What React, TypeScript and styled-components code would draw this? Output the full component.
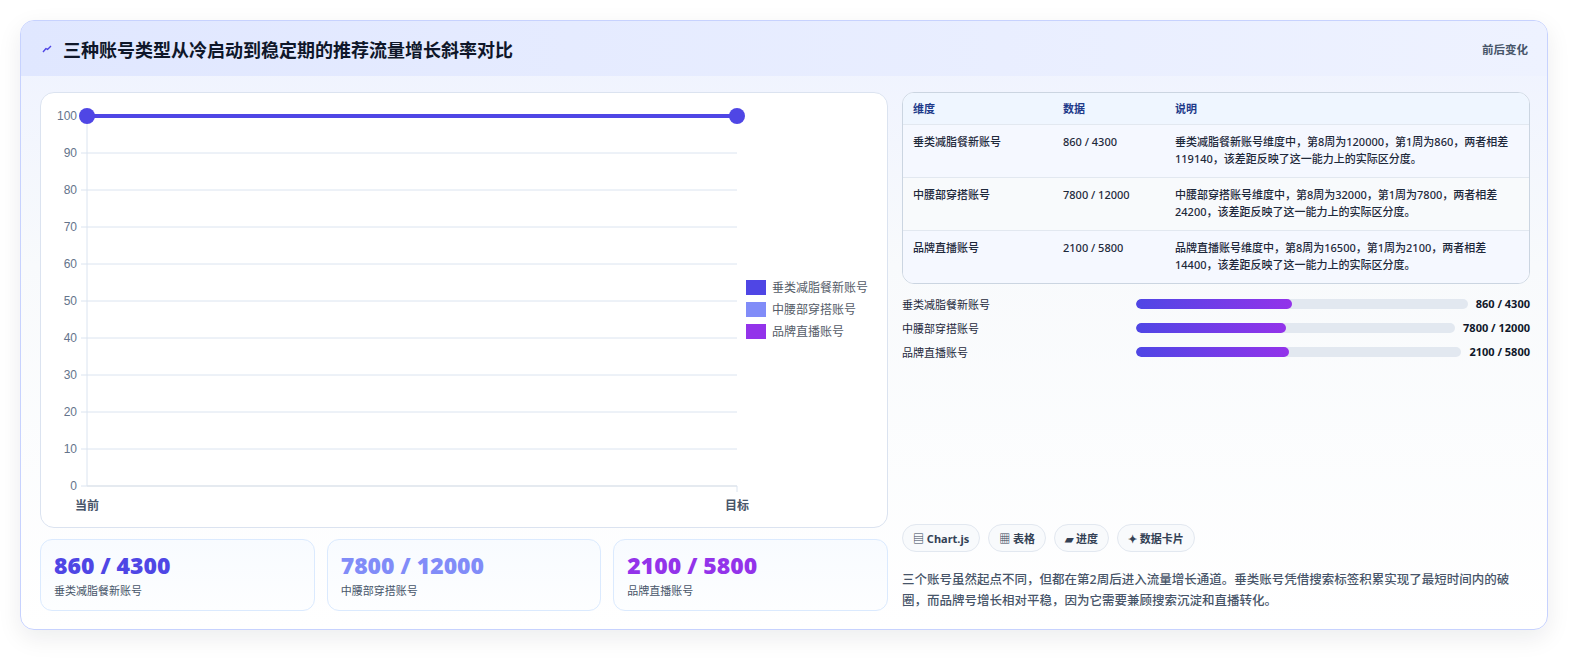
import React from "react";
import styled, { createGlobalStyle } from "styled-components";

const Global = createGlobalStyle`
  html, body { margin: 0; background: #ffffff; font-family: "Noto Sans", "Noto Sans CJK SC", sans-serif; overflow: hidden; }
  * { box-sizing: border-box; }
`;

const Page = styled.div`width: 1588px; height: 658px; padding: 20px 40px 0 20px; overflow: hidden;`;
const Card = styled.div`
  width: 1528px; height: 610px; border: 1px solid #c7d2fe; border-radius: 14px; overflow: hidden;
  background: linear-gradient(180deg, #eef2ff 0%, #f8fafc 40%, #ffffff 100%);
  box-shadow: 0 8px 24px rgba(15, 23, 42, 0.08);
  display: flex; flex-direction: column;
`;
const Header = styled.div`
  height: 55px; flex: none; display: flex; align-items: center; justify-content: space-between;
  padding: 0 19px 0 20px; background: linear-gradient(90deg, #e0e7ff, #eef2ff);
`;
const Title = styled.h1`
  margin: 0; font-size: 18px; font-weight: 700; color: #0f172a; display: flex; align-items: center; gap: 10px;
`;
const Meta = styled.span`font-size: 11.5px; font-weight: 700; color: #475569;`;
const Body = styled.div`
  flex: 1; min-width: 0; display: grid; grid-template-columns: minmax(0, 848px) minmax(0, 1fr); gap: 14px;
  padding: 16px 17px 19px 19px;
`;
const Col = styled.div`display: flex; flex-direction: column; gap: 11px; min-height: 0; min-width: 0;`;
const ChartBox = styled.div`height: 436px; background: #fff; border: 1px solid #dbe3f0; border-radius: 14px; overflow: hidden;`;
const Stats = styled.div`display: grid; grid-template-columns: repeat(3, 1fr); gap: 12px;`;
const Stat = styled.div`
  height: 72px; border: 1px solid #dbeafe; border-radius: 12px; padding: 10px 13px;
  background: linear-gradient(180deg, #f8fbff, #fdfeff);
`;
const StatVal = styled.div<{ $c: string }>`
  font-family: "Open Sans", "Noto Sans", sans-serif; font-size: 23px; font-weight: 800; color: ${p => p.$c}; line-height: 30px;
`;
const StatLabel = styled.div`font-size: 11px; color: #475569; margin-top: 2px;`;
const Table = styled.div`border: 1px solid #cbd5e1; border-radius: 12px; overflow: hidden; background: #fff;`;
const Row = styled.div<{ $head?: boolean; $alt?: boolean }>`
  display: grid; grid-template-columns: 150px 112px 1fr; padding: 0 10px;
  min-height: ${p => (p.$head ? "31px" : "53px")}; align-items: ${p => (p.$head ? "center" : "start")};
  padding-top: ${p => (p.$head ? "0" : "8px")};
  background: ${p => (p.$head ? "#eff6ff" : p.$alt ? "#f8fafc" : "#f5f8ff")};
  border-top: ${p => (p.$head ? "none" : "1px solid #e2e8f0")};
  font-size: 11px; line-height: 17px; color: ${p => (p.$head ? "#1e3a8a" : "#1e293b")};
  font-weight: ${p => (p.$head ? 700 : 500)};
`;
const Bars = styled.div`display: flex; flex-direction: column; gap: 7px;`;
const BarRow = styled.div`display: grid; grid-template-columns: 226px 1fr auto; align-items: center; gap: 8px; font-size: 11px; color: #1e293b; height: 17px;`;
const Track = styled.div`height: 10px; border-radius: 5px; background: #e2e8f0; overflow: hidden;`;
const Fill = styled.div`height: 100%; border-radius: 5px; background: linear-gradient(90deg, #4f46e5, #9333ea);`;
const BarVal = styled.span`font-weight: 700; color: #0f172a;`;
const Spacer = styled.div`flex: 1;`;
const Tags = styled.div`display: flex; gap: 8px;`;
const Tag = styled.span`
  height: 28px; padding: 0 10px; border-radius: 14px; border: 1px solid #e2e8f0; background: #f8fafc;
  font-size: 11px; font-weight: 700; color: #334155; display: flex; align-items: center; gap: 3px;
`;
const Para = styled.p`margin: 6px 0 0; font-size: 12.5px; line-height: 21px; color: #475569; font-weight: 500;`;

const rows = [
  ["垂类减脂餐新账号", "860 / 4300", "垂类减脂餐新账号维度中，第8周为120000，第1周为860，两者相差119140，该差距反映了这一能力上的实际区分度。"],
  ["中腰部穿搭账号", "7800 / 12000", "中腰部穿搭账号维度中，第8周为32000，第1周为7800，两者相差24200，该差距反映了这一能力上的实际区分度。"],
  ["品牌直播账号", "2100 / 5800", "品牌直播账号维度中，第8周为16500，第1周为2100，两者相差14400，该差距反映了这一能力上的实际区分度。"],
];
const colors = ["#4f46e5", "#818cf8", "#9333ea"];

function Bolt() {
  return (
    <svg width="12" height="12" viewBox="0 0 12 12">
      <path d="M2 9 L5 5.5 L6.5 6.5 L10 3" stroke="#4f46e5" strokeWidth="1.4" fill="none" strokeLinejoin="round" />
    </svg>
  );
}

function Chart() {
  const x0 = 46, x1 = 696, y0 = 393, yTop = 23;
  const ticks = [0, 10, 20, 30, 40, 50, 60, 70, 80, 90, 100];
  const yOf = (v: number) => y0 - (v / 100) * (y0 - yTop);
  return (
    <svg width="848" height="436" style={{ display: "block" }} fontFamily="'Liberation Sans', Arial, sans-serif">
      {ticks.map(t => (
        <g key={t}>
          <line x1={x0} x2={x1} y1={yOf(t)} y2={yOf(t)} stroke={t === 0 ? "#cbd5e1" : "#dbe4f0"} />
          <line x1={x0 - 6} x2={x0} y1={yOf(t)} y2={yOf(t)} stroke="#dbe4f0" />
          <text x={x0 - 10} y={yOf(t) + 4} textAnchor="end" fontSize="12" fill="#64748b">{t}</text>
        </g>
      ))}
      <line x1={x0} x2={x0} y1={yTop} y2={y0} stroke="#dbe4f0" />
      <line x1={x1} x2={x1} y1={y0} y2={y0 + 6} stroke="#dbe4f0" />
      <line x1={x0} x2={x1} y1={yTop} y2={yTop} stroke="#4f46e5" strokeWidth="4" />
      <circle cx={x0} cy={yTop} r="8" fill="#4f46e5" />
      <circle cx={x1} cy={yTop} r="8" fill="#4f46e5" />
      <text x={x0} y={417} textAnchor="middle" fontSize="12" fill="#475569" fontFamily="'Noto Sans CJK SC', sans-serif" fontWeight="700">当前</text>
      <text x={x1} y={417} textAnchor="middle" fontSize="12" fill="#475569" fontFamily="'Noto Sans CJK SC', sans-serif" fontWeight="700">目标</text>
      {["垂类减脂餐新账号", "中腰部穿搭账号", "品牌直播账号"].map((l, i) => (
        <g key={l}>
          <rect x={705} y={187 + i * 22} width={20} height={15} fill={colors[i]} />
          <text x={731} y={199 + i * 22} fontSize="12" fill="#555c68" fontFamily="'Noto Sans CJK SC', sans-serif">{l}</text>
        </g>
      ))}
    </svg>
  );
}

export default function App() {
  return (
    <>
      <Global />
      <Page>
        <Card>
          <Header>
            <Title><Bolt />三种账号类型从冷启动到稳定期的推荐流量增长斜率对比</Title>
            <Meta>前后变化</Meta>
          </Header>
          <Body>
            <Col>
              <ChartBox><Chart /></ChartBox>
              <Stats>
                {rows.map((r, i) => (
                  <Stat key={r[0]}>
                    <StatVal $c={colors[i]}>{r[1]}</StatVal>
                    <StatLabel>{r[0]}</StatLabel>
                  </Stat>
                ))}
              </Stats>
            </Col>
            <Col>
              <Table>
                <Row $head><span>维度</span><span>数据</span><span>说明</span></Row>
                {rows.map((r, i) => (
                  <Row key={r[0]} $alt={i === 1}><span>{r[0]}</span><span>{r[1]}</span><span>{r[2]}</span></Row>
                ))}
              </Table>
              <Bars>
                {rows.map(r => (
                  <BarRow key={r[0]}>
                    <span>{r[0]}</span>
                    <Track><Fill style={{ width: "47%" }} /></Track>
                    <BarVal>{r[1]}</BarVal>
                  </BarRow>
                ))}
              </Bars>
              <Spacer />
              <Tags>
                <Tag>▤ Chart.js</Tag>
                <Tag>▦ 表格</Tag>
                <Tag>▰ 进度</Tag>
                <Tag>✦ 数据卡片</Tag>
              </Tags>
              <Para>三个账号虽然起点不同，但都在第2周后进入流量增长通道。垂类账号凭借搜索标签积累实现了最短时间内的破圈，而品牌号增长相对平稳，因为它需要兼顾搜索沉淀和直播转化。</Para>
            </Col>
          </Body>
        </Card>
      </Page>
    </>
  );
}
